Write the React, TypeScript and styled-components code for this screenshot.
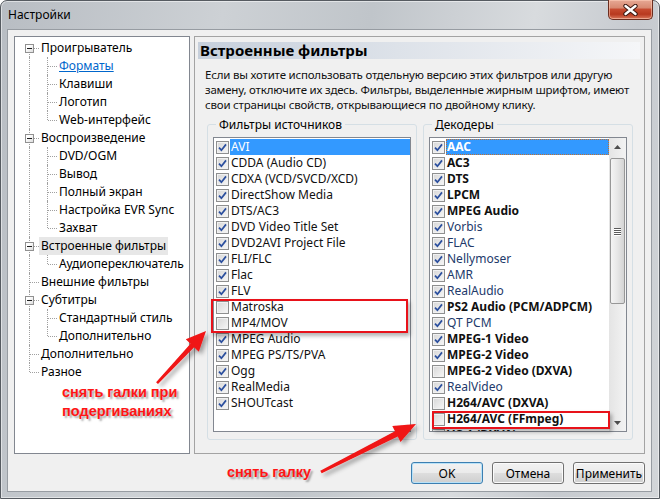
import React from "react";
import styled, { createGlobalStyle, css } from "styled-components";

const UI_FONT = `"Noto Sans", "Open Sans", "DejaVu Sans", sans-serif`;

const GlobalStyle = createGlobalStyle`
  html, body {
    margin: 0;
    padding: 0;
    background: #ffffff;
  }
  body {
    width: 660px;
    height: 499px;
    overflow: hidden;
    font-family: ${UI_FONT};
    font-size: 12px;
    color: #000;
  }
  * {
    box-sizing: border-box;
  }
`;

type TreeLine = "none" | "pipe" | "tee" | "first" | "elbow";

type TreeRow = {
  label: string;
  root: TreeLine;
  child?: TreeLine;
  box?: boolean;
  link?: boolean;
  selected?: boolean;
};

const TREE: TreeRow[] = [
  { label: "Проигрыватель", root: "first", box: true },
  { label: "Форматы", root: "pipe", child: "tee", link: true },
  { label: "Клавиши", root: "pipe", child: "tee" },
  { label: "Логотип", root: "pipe", child: "tee" },
  { label: "Web-интерфейс", root: "pipe", child: "elbow" },
  { label: "Воспроизведение", root: "tee", box: true },
  { label: "DVD/OGM", root: "pipe", child: "tee" },
  { label: "Вывод", root: "pipe", child: "tee" },
  { label: "Полный экран", root: "pipe", child: "tee" },
  { label: "Настройка EVR Sync", root: "pipe", child: "tee" },
  { label: "Захват", root: "pipe", child: "elbow" },
  { label: "Встроенные фильтры", root: "tee", box: true, selected: true },
  { label: "Аудиопереключатель", root: "pipe", child: "elbow" },
  { label: "Внешние фильтры", root: "tee" },
  { label: "Субтитры", root: "tee", box: true },
  { label: "Стандартный стиль", root: "pipe", child: "tee" },
  { label: "Дополнительно", root: "pipe", child: "elbow" },
  { label: "Дополнительно", root: "tee" },
  { label: "Разное", root: "elbow" },
];

type Filter = { name: string; checked: boolean; bold?: boolean; selected?: boolean };

const SOURCES: Filter[] = [
  { name: "AVI", checked: true, selected: true },
  { name: "CDDA (Audio CD)", checked: true },
  { name: "CDXA (VCD/SVCD/XCD)", checked: true },
  { name: "DirectShow Media", checked: true },
  { name: "DTS/AC3", checked: true },
  { name: "DVD Video Title Set", checked: true },
  { name: "DVD2AVI Project File", checked: true },
  { name: "FLI/FLC", checked: true },
  { name: "Flac", checked: true },
  { name: "FLV", checked: true },
  { name: "Matroska", checked: false },
  { name: "MP4/MOV", checked: false },
  { name: "MPEG Audio", checked: true },
  { name: "MPEG PS/TS/PVA", checked: true },
  { name: "Ogg", checked: true },
  { name: "RealMedia", checked: true },
  { name: "SHOUTcast", checked: true },
];

const DECODERS: Filter[] = [
  { name: "AAC", checked: true, bold: true, selected: true },
  { name: "AC3", checked: true, bold: true },
  { name: "DTS", checked: true, bold: true },
  { name: "LPCM", checked: true, bold: true },
  { name: "MPEG Audio", checked: true, bold: true },
  { name: "Vorbis", checked: true },
  { name: "FLAC", checked: true },
  { name: "Nellymoser", checked: true },
  { name: "AMR", checked: true },
  { name: "RealAudio", checked: true },
  { name: "PS2 Audio (PCM/ADPCM)", checked: true, bold: true },
  { name: "QT PCM", checked: true },
  { name: "MPEG-1 Video", checked: true, bold: true },
  { name: "MPEG-2 Video", checked: true, bold: true },
  { name: "MPEG-2 Video (DXVA)", checked: false, bold: true },
  { name: "RealVideo", checked: true },
  { name: "H264/AVC (DXVA)", checked: false, bold: true },
  { name: "H264/AVC (FFmpeg)", checked: false, bold: true },
  { name: "VC-1 (DXVA)", checked: false, bold: true },
];

/* ---------- window frame ---------- */

const Window = styled.div`
  position: relative;
  width: 660px;
  height: 499px;
  display: flex;
  flex-direction: column;
  padding: 0 7px 6px 6px;
  border: 1px solid #565b61;
  border-radius: 7px 7px 0 0;
  background: linear-gradient(
    100deg,
    #b8bdc3 0%,
    #cdd1d5 30%,
    #c0c5ca 50%,
    #d8dbde 72%,
    #c6cacf 86%,
    #d3d6d9 100%
  );
  box-shadow: inset 0 0 0 1px rgba(255, 255, 255, 0.5);
`;

const TitleBar = styled.div`
  height: 28px;
  display: flex;
  align-items: flex-start;
  justify-content: space-between;
`;

const Title = styled.span`
  margin-top: 6px;
  padding-left: 1px;
  font-size: 12px;
  line-height: 16px;
  color: #000;
`;

const CloseButton = styled.div`
  width: 45px;
  height: 20px;
  margin-top: -1px;
  margin-right: -1px;
  border: 1px solid #6b2d1f;
  border-top: none;
  border-radius: 0 0 5px 5px;
  background: linear-gradient(
    180deg,
    #e7a995 0%,
    #d88a72 40%,
    #c64a2f 50%,
    #b8391f 75%,
    #d9775b 100%
  );
  box-shadow: inset 0 0 0 1px rgba(255, 210, 190, 0.55);
  display: flex;
  align-items: center;
  justify-content: center;
`;

const Client = styled.div`
  flex: 1;
  display: flex;
  flex-direction: column;
  background: #f0f0f0;
  border: 1px solid #979ca2;
  padding: 6px 6px 7px 6px;
`;

const Body = styled.div`
  height: 418px;
  display: flex;
  gap: 4px;
`;

/* ---------- tree ---------- */

const Tree = styled.div`
  width: 176px;
  flex-shrink: 0;
  background: #fff;
  border: 1px solid #828790;
  padding: 2px 0 0 6px;
`;

const TreeItem = styled.div`
  display: flex;
  align-items: center;
  height: 18px;
`;

const dotted = "1px dotted #a0a0a0";

const LineCell = styled.span<{ $kind: TreeLine }>`
  position: relative;
  width: 18px;
  height: 18px;
  flex-shrink: 0;

  &::before {
    content: "";
    position: absolute;
    left: 8px;
    width: 0;
    border-left: ${dotted};
    top: ${(p) => (p.$kind === "first" ? "9px" : "0")};
    bottom: ${(p) => (p.$kind === "elbow" ? "9px" : "0")};
    display: ${(p) => (p.$kind === "none" ? "none" : "block")};
  }

  &::after {
    content: "";
    position: absolute;
    left: 9px;
    right: 0;
    top: 9px;
    height: 0;
    border-top: ${dotted};
    display: ${(p) => (p.$kind === "pipe" || p.$kind === "none" ? "none" : "block")};
  }
`;

const Expander = styled.span`
  position: absolute;
  z-index: 1;
  left: 4px;
  top: 5px;
  width: 9px;
  height: 9px;
  border: 1px solid #919191;
  background: linear-gradient(135deg, #ffffff 30%, #dcdcdc 100%);

  &::after {
    content: "";
    position: absolute;
    left: 1px;
    top: 3px;
    width: 5px;
    height: 1px;
    background: #1e1e1e;
  }
`;

const TreeLabel = styled.span<{ $link?: boolean; $selected?: boolean }>`
  padding: 0 2px;
  height: 18px;
  line-height: 18px;
  white-space: nowrap;
  color: #000;
  ${(p) =>
    p.$link &&
    css`
      color: #0066cc;
      text-decoration: underline;
    `}
  ${(p) =>
    p.$selected &&
    css`
      background: #e7e7e7;
    `}
`;

/* ---------- page ---------- */

const Page = styled.div`
  flex: 1;
  display: flex;
  flex-direction: column;
  border: 1px solid #a3a3a3;
  padding-bottom: 13px;
`;

const PageHeader = styled.div`
  margin: 5px 4px 0 3px;
  height: 17px;
  padding-left: 2px;
  font-size: 15px;
  line-height: 17px;
  font-weight: 700;
  color: #000;
  background: linear-gradient(90deg, #c6cfdb 0%, #dde2e9 45%, #f5f6f8 100%);
`;

const Description = styled.p`
  margin: 8px 0 0 10px;
  font-size: 11.5px;
  letter-spacing: -0.2px;
  line-height: 15px;
  color: #111;
  white-space: nowrap;
`;

const Groups = styled.div`
  flex: 1;
  display: flex;
  gap: 6px;
  margin-top: 5px;
  padding: 0 0 0 12px;
  min-height: 0;
`;

const Group = styled.fieldset`
  width: 210px;
  flex: none;
  min-width: 0;
  margin: 0;
  padding: 5px 5px 7px 5px;
  border: 1px solid #d5dfe5;
  border-radius: 3px;
  display: flex;
  flex-direction: column;
`;

const Legend = styled.legend`
  margin-left: 3px;
  padding: 0 3px;
  font-size: 12px;
  line-height: 15px;
  color: #000;
`;

const ListBox = styled.div`
  flex: 1;
  display: flex;
  min-height: 0;
  min-width: 0;
  background: #fff;
  border: 1px solid #828790;
  overflow: hidden;
`;

const Rows = styled.div`
  flex: 1;
  min-width: 0;
  padding: 1px 0 0 2px;
  overflow: hidden;
`;

const Row = styled.div`
  display: flex;
  align-items: center;
  height: 16px;
`;

const CheckBox = styled.span`
  width: 13px;
  height: 13px;
  flex-shrink: 0;
  border: 1px solid #8e8f8f;
  background: linear-gradient(135deg, #d6d6d6 0%, #f7f7f7 100%);
  box-shadow: inset 0 0 0 1px #f1f1f1;
  display: flex;
  align-items: center;
  justify-content: center;
`;

const RowLabel = styled.span<{ $bold?: boolean; $selected?: boolean; $focus?: boolean; $tint?: boolean }>`
  flex: 1;
  min-width: 0;
  margin-left: 1px;
  padding-left: 1px;
  height: 16px;
  line-height: 16px;
  white-space: nowrap;
  overflow: hidden;
  font-weight: ${(p) => (p.$bold ? 700 : 400)};
  color: ${(p) => (p.$tint ? "#22396a" : "#111")};
  ${(p) =>
    p.$selected &&
    css`
      background: #3399ff;
      color: #fff;
    `}
  ${(p) =>
    p.$focus &&
    css`
      outline: 1px dotted #c07030;
      outline-offset: -1px;
    `}
`;

/* ---------- scrollbar ---------- */

const ScrollBar = styled.div`
  width: 17px;
  flex-shrink: 0;
  display: flex;
  flex-direction: column;
  background: linear-gradient(90deg, #e4e4e4 0%, #f3f3f3 100%);
`;

const ScrollArrow = styled.div`
  height: 17px;
  display: flex;
  align-items: center;
  justify-content: center;
`;

const ScrollTrack = styled.div`
  flex: 1;
  padding-top: 3px;
`;

const Thumb = styled.div`
  height: 146px;
  margin: 0 1px;
  border: 1px solid #979797;
  border-radius: 2px;
  background: linear-gradient(90deg, #f4f4f4 0%, #e6e6e6 50%, #d4d4d4 100%);
  display: flex;
  flex-direction: column;
  align-items: center;
  justify-content: center;
  gap: 1px;
`;

const Grip = styled.span`
  width: 7px;
  height: 1px;
  background: #5a5a5a;
  box-shadow: 0 1px 0 #fff;
`;

/* ---------- buttons ---------- */

const ButtonRow = styled.div`
  margin-top: 8px;
  display: flex;
  justify-content: flex-end;
  gap: 9px;
`;

const Button = styled.button<{ $default?: boolean }>`
  width: 72px;
  height: 22px;
  padding: 0;
  font-family: ${UI_FONT};
  font-size: 12px;
  color: #000;
  border: 1px solid ${(p) => (p.$default ? "#3c7fb1" : "#707070")};
  border-radius: 3px;
  background: linear-gradient(180deg, #f2f2f2 0%, #ebebeb 48%, #dddddd 52%, #cfcfcf 100%);
  box-shadow: inset 0 0 0 1px ${(p) => (p.$default ? "#b9e2f8" : "#fbfbfb")};
`;

/* ---------- annotations ---------- */

const Overlay = styled.div`
  position: absolute;
  left: -1px;
  top: -1px;
  width: 660px;
  height: 499px;
  pointer-events: none;
`;

const Arrows = styled.svg`
  position: absolute;
  left: 0;
  top: 0;
`;

const Frame = styled.div<{ $x: number; $y: number; $w: number; $h: number }>`
  position: absolute;
  left: ${(p) => p.$x}px;
  top: ${(p) => p.$y}px;
  width: ${(p) => p.$w}px;
  height: ${(p) => p.$h}px;
  border: 2px solid #e8121a;
  box-shadow: 2px 3px 4px rgba(0, 0, 0, 0.3);
`;

const Note = styled.div<{ $x: number; $y: number }>`
  position: absolute;
  left: ${(p) => p.$x}px;
  top: ${(p) => p.$y}px;
  font-family: "Liberation Sans", Arial, sans-serif;
  font-weight: 700;
  font-size: 14.5px;
  line-height: 19px;
  color: #ff1515;
  white-space: nowrap;
  text-shadow: 2px 2px 2px rgba(0, 0, 0, 0.35);
`;

/* ---------- parts ---------- */

const Check = ({ checked }: { checked: boolean }) => (
  <CheckBox>
    {checked && (
      <svg width="9" height="9" viewBox="0 0 9 9">
        <path d="M1 4.6 L3.4 7.2 L8 1.4" fill="none" stroke="#2b4f9e" strokeWidth="1.7" />
      </svg>
    )}
  </CheckBox>
);

const FilterList = ({ items, scroll }: { items: Filter[]; scroll?: boolean }) => (
  <ListBox>
    <Rows>
      {items.map((f) => (
        <Row key={f.name}>
          <Check checked={f.checked} />
          <RowLabel
            $bold={f.bold}
            $selected={f.selected}
            $focus={f.selected && scroll}
            $tint={scroll && !f.bold}
          >
            {f.name}
          </RowLabel>
        </Row>
      ))}
    </Rows>
    {scroll && (
      <ScrollBar>
        <ScrollArrow>
          <svg width="7" height="4" viewBox="0 0 7 4">
            <path d="M0 4 L3.5 0 L7 4 Z" fill="#4d4d4d" />
          </svg>
        </ScrollArrow>
        <ScrollTrack>
          <Thumb>
            <Grip />
            <Grip />
            <Grip />
            <Grip />
          </Thumb>
        </ScrollTrack>
        <ScrollArrow>
          <svg width="7" height="4" viewBox="0 0 7 4">
            <path d="M0 0 L3.5 4 L7 0 Z" fill="#4d4d4d" />
          </svg>
        </ScrollArrow>
      </ScrollBar>
    )}
  </ListBox>
);

export default function App() {
  return (
    <>
      <GlobalStyle />
      <Window>
        <TitleBar>
          <Title>Настройки</Title>
          <CloseButton>
            <svg width="15" height="12" viewBox="0 0 15 12">
              <path d="M2.5 2 L12.5 10 M12.5 2 L2.5 10" stroke="#3b1710" strokeWidth="4.4" strokeLinecap="round" />
              <path d="M2.5 2 L12.5 10 M12.5 2 L2.5 10" stroke="#ffffff" strokeWidth="2.4" strokeLinecap="round" />
            </svg>
          </CloseButton>
        </TitleBar>

        <Client>
          <Body>
            <Tree>
              {TREE.map((r, i) => (
                <TreeItem key={i}>
                  <LineCell $kind={r.root}>{r.box && <Expander />}</LineCell>
                  {r.child && <LineCell $kind={r.child} />}
                  <TreeLabel $link={r.link} $selected={r.selected}>
                    {r.label}
                  </TreeLabel>
                </TreeItem>
              ))}
            </Tree>

            <Page>
              <PageHeader>Встроенные фильтры</PageHeader>
              <Description>
                Если вы хотите использовать отдельную версию этих фильтров или другую
                <br />
                замену, отключите их здесь. Фильтры, выделенные жирным шрифтом, имеют
                <br />
                свои страницы свойств, открывающиеся по двойному клику.
              </Description>
              <Groups>
                <Group>
                  <Legend>Фильтры источников</Legend>
                  <FilterList items={SOURCES} />
                </Group>
                <Group>
                  <Legend>Декодеры</Legend>
                  <FilterList items={DECODERS} scroll />
                </Group>
              </Groups>
            </Page>
          </Body>

          <ButtonRow>
            <Button $default>OK</Button>
            <Button>Отмена</Button>
            <Button>Применить</Button>
          </ButtonRow>
        </Client>

        <Overlay>
          <Frame $x={211} $y={299} $w={197} $h={34} />
          <Frame $x={432} $y={411} $w={178} $h={18} />
          <Arrows width="660" height="499" viewBox="0 0 660 499">
            <defs>
              <filter id="arrowShadow" x="-20%" y="-20%" width="150%" height="150%">
                <feDropShadow dx="3" dy="3" stdDeviation="2" floodColor="#000" floodOpacity="0.35" />
              </filter>
            </defs>
            <g fill="#f01414" filter="url(#arrowShadow)">
              <polygon points="156.1,382.2 190.5,343.8 185.8,339.3 206,331 198.8,351.7 194.1,347.2 158,384" />
              <polygon points="320.3,470.7 395,431.2 392.3,425.9 416,424 400.5,441.9 397.8,436.6 321.7,473.3" />
            </g>
          </Arrows>
          <Note $x={62} $y={383}>
            снять галки при
            <br />
            подергиваниях
          </Note>
          <Note $x={227} $y={463}>
            снять галку
          </Note>
        </Overlay>
      </Window>
    </>
  );
}
